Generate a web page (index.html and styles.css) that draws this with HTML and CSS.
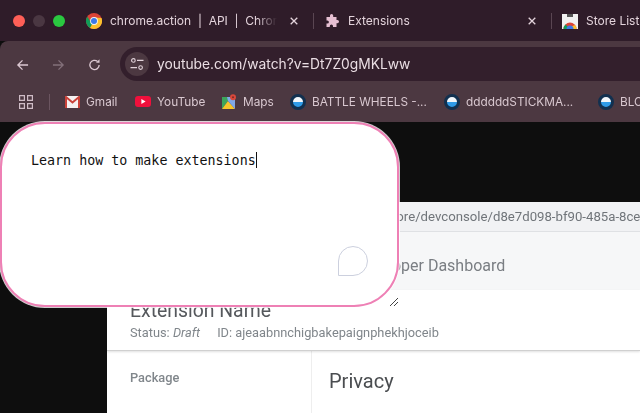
FILE: index.html
```html
<!DOCTYPE html>
<html lang="en">
<head>
    <meta charset="UTF-8">
    <title>Learn how to make extensions</title>
    <link rel="stylesheet" href="styles.css">
</head>
<body>
    <header class="browser">
        <div class="tabs">
            <div class="lights">
                <span class="light red"></span>
                <span class="light grey"></span>
                <span class="light green"></span>
            </div>
            <div class="tab tab-first">
                <svg class="favicon" viewBox="0 0 16 16">
                    <circle cx="8" cy="8" r="8" fill="#db4437"/>
                    <path d="M8 8 L1.07 4 A8 8 0 0 0 4 14.93 Z" fill="#0f9d58"/>
                    <path d="M8 8 L4 14.93 A8 8 0 0 0 8 16 A8 8 0 0 0 15.5 5 L8 4.5 Z" fill="#fbc02d"/>
                    <path d="M8 4.5 L1.9 4.5 L4 8 Z" fill="#db4437"/>
                    <circle cx="8" cy="8" r="3.9" fill="#f3f3f3"/>
                    <circle cx="8" cy="8" r="3" fill="#3b78e7"/>
                </svg>
                <span class="tab-title faded">chrome.action &nbsp;|&nbsp; API &nbsp;|&nbsp; Chrome</span>
                <svg class="close" viewBox="0 0 8 8"><path d="M.7 .7 L7.3 7.3 M7.3 .7 L.7 7.3" stroke="#e3d3db" stroke-width="1.3"/></svg>
            </div>
            <div class="tab tab-second">
                <svg class="favicon puzzle" viewBox="0 0 14 14">
                    <path d="M5 1.6 a1.6 1.6 0 0 1 3.2 0 V3 h3.3 v3 h0.9 a1.6 1.6 0 0 1 0 3.2 h-0.9 V13 H8 v-1 a1.6 1.6 0 0 0 -3.2 0 v1 H1.5 V9.6 h0.8 a1.6 1.6 0 0 0 0 -3.2 H1.5 V3 H5 Z" fill="#e6bfd2"/>
                </svg>
                <span class="tab-title">Extensions</span>
                <svg class="close" viewBox="0 0 8 8"><path d="M.7 .7 L7.3 7.3 M7.3 .7 L.7 7.3" stroke="#e3d3db" stroke-width="1.3"/></svg>
            </div>
            <div class="tab tab-third">
                <svg class="favicon" viewBox="0 0 16 16">
                    <path d="M0 1 H16 V16 H0 Z" fill="#f1f1f1"/>
                    <path d="M5 1 H11 V4 H5 Z" fill="#555"/>
                    <path d="M1.5 16 A6.5 6.5 0 0 1 14.5 16 Z" fill="#db4437"/>
                    <path d="M1.5 16 A6.5 6.5 0 0 1 3.5 11.5 L8 16 Z" fill="#0f9d58"/>
                    <path d="M14.5 16 A6.5 6.5 0 0 0 13 12 L8 14 V16 Z" fill="#fbc02d"/>
                    <path d="M4.5 16 A3.5 3.5 0 0 1 11.5 16 Z" fill="#3b78e7"/>
                </svg>
                <span class="tab-title">Store Listing</span>
            </div>
        </div>

        <div class="toolbar">
            <svg class="nav-icon" viewBox="0 0 14 14">
                <path d="M13 7 H2 M7 2 L2 7 L7 12" fill="none" stroke="#dcc8d2" stroke-width="1.4"/>
            </svg>
            <svg class="nav-icon" viewBox="0 0 14 14">
                <path d="M1 7 H12 M7 2 L12 7 L7 12" fill="none" stroke="#83707a" stroke-width="1.4"/>
            </svg>
            <svg class="nav-icon" viewBox="0 0 14 14">
                <path d="M12 7 A5 5 0 1 1 10.3 3.2" fill="none" stroke="#dcc8d2" stroke-width="1.4"/>
                <path d="M12.4 0.8 V4.6 H8.6 Z" fill="#dcc8d2"/>
            </svg>
            <div class="omnibox">
                <span class="site-info">
                    <svg viewBox="0 0 14 14" width="14" height="14">
                        <circle cx="3.4" cy="3.4" r="1.8" fill="none" stroke="#e3d3db" stroke-width="1.1"/>
                        <path d="M7 3.4 H13.5 M0.5 10.6 H7" stroke="#e3d3db" stroke-width="1.1"/>
                        <circle cx="10.6" cy="10.6" r="1.8" fill="none" stroke="#e3d3db" stroke-width="1.1"/>
                    </svg>
                </span>
                <span class="url">youtube.com/watch?v=Dt7Z0gMKLww</span>
            </div>
        </div>

        <nav class="bookmarks">
            <svg class="apps" viewBox="0 0 14 14">
                <path d="M.6 .6 H5.4 V5.4 H.6 Z M8.6 .6 H13.4 V5.4 H8.6 Z M.6 8.6 H5.4 V13.4 H.6 Z M8.6 8.6 H13.4 V13.4 H8.6 Z" fill="none" stroke="#cfbcc6" stroke-width="1.2"/>
            </svg>
            <span class="bar-sep"></span>
            <a class="mark mark-gmail">
                <svg viewBox="0 0 15 12" width="15" height="12">
                    <path d="M0 0 H15 V12 H0 Z" fill="#f4f1f1"/>
                    <path d="M1 12 V1 L7.5 6.5 L14 1 V12" fill="none" stroke="#c9423a" stroke-width="2"/>
                </svg>
                Gmail
            </a>
            <a class="mark mark-youtube">
                <svg viewBox="0 0 16 11" width="16" height="11">
                    <rect width="16" height="11" rx="3" fill="#f0103c"/>
                    <path d="M6.4 3 L10.6 5.5 L6.4 8 Z" fill="#fff"/>
                </svg>
                YouTube
            </a>
            <a class="mark mark-maps">
                <svg viewBox="0 0 14 15" width="14" height="15">
                    <path d="M0 3 L9 3 L0 15 Z" fill="#3ca55c"/>
                    <path d="M0 15 L6 7 L13 15 Z" fill="#f7c52b"/>
                    <path d="M5 3 H13 V15 L6 7 Z" fill="#7fa8e8"/>
                    <circle cx="11" cy="3.2" r="3" fill="#d9483b"/>
                    <circle cx="11" cy="3.2" r="1" fill="#7c2c25"/>
                </svg>
                Maps
            </a>
            <a class="mark mark-wheels"><span class="disc"></span>BATTLE WHEELS -...</a>
            <a class="mark mark-stick"><span class="disc"></span>ddddddSTICKMA...</a>
            <a class="mark"><span class="disc"></span>BLOCK</a>
        </nav>
    </header>

    <main class="desk">
        <div class="shot">
            <div class="shot-url">chrome.google.com/webstore/devconsole/d8e7d098-bf90-485a-8ce7-f2a1c0d39b14</div>
            <div class="shot-title">Developer Dashboard</div>
            <div class="shot-head">
                <div class="ext-name">Extension Name</div>
                <div class="ext-meta">Status: <em>Draft</em><span class="ext-id">ID: ajeaabnnchigbakepaignphekhjoceib</span></div>
            </div>
            <div class="shot-body">
                <ul class="shot-side">
                    <li>Package</li>
                    <li>Store listing</li>
                </ul>
                <h2 class="shot-heading">Privacy</h2>
            </div>
        </div>
    </main>

    <div class="note">
        <div class="note-text">Learn how to make extensions<span class="caret"></span></div>
        <span class="bubble"></span>
        <svg class="grip" viewBox="0 0 8 8">
            <path d="M0 8 L8 0 M4 8 L8 4" stroke="#444" stroke-width="1"/>
        </svg>
    </div>
</body>
</html>
```

FILE: styles.css
```css
html, body {
    margin: 0;
    padding: 0;
}
body {
    width: 640px;
    height: 413px;
    overflow: hidden;
    position: relative;
    background: #0e0e0e;
    font-family: Inter, "Liberation Sans", sans-serif;
    color: #e3d3db;
}
.browser {
    filter: blur(0.25px);
}

/* tab strip */
.tabs {
    height: 41px;
    background: #2f1c29;
    display: flex;
    align-items: center;
    overflow: hidden;
    font-size: 12px;
}
.lights {
    display: flex;
    gap: 8px;
    padding-left: 13px;
    width: 73px;
    flex: none;
    box-sizing: border-box;
}
.light {
    width: 12px;
    height: 12px;
    border-radius: 50%;
}
.red { background: #fe5f57; }
.grey { background: #4a3742; }
.green { background: #2ac840; }

.tab {
    display: flex;
    align-items: center;
    flex: none;
    height: 16px;
    gap: 8px;
    box-sizing: border-box;
    position: relative;
}
.tab-first { width: 240px; padding-left: 13px; }
.tab-second { width: 238px; padding-left: 11px; gap: 9px; border-left: 1px solid #5a4652; }
.tab-third { padding-left: 10px; border-left: 1px solid #5a4652; }
.favicon { width: 16px; height: 16px; flex: none; }
.puzzle { width: 14px; height: 14px; }
.tab-title {
    white-space: nowrap;
    overflow: hidden;
    color: #e3d3db;
}
.faded {
    width: 167px;
    -webkit-mask-image: linear-gradient(to right, #000 88%, transparent);
    mask-image: linear-gradient(to right, #000 88%, transparent);
}
.close {
    position: absolute;
    right: 15px;
    top: 4px;
    width: 8px;
    height: 8px;
}

/* toolbar */
.toolbar {
    height: 40px;
    background: #4c3841;
    border-radius: 8px 0 0 0;
    box-sizing: border-box;
    padding: 6px 0 0 16px;
    display: flex;
    gap: 23px;
}
.nav-icon {
    width: 13px;
    height: 14px;
    margin-top: 11px;
    flex: none;
}
.omnibox {
    flex: 1;
    margin-left: -4px;
    background: #331f2c;
    border-radius: 17px 0 0 17px;
    display: flex;
    align-items: center;
    padding-left: 5px;
    gap: 8px;
}
.site-info {
    width: 24px;
    height: 24px;
    border-radius: 50%;
    background: #4c3841;
    display: flex;
    align-items: center;
    justify-content: center;
}
.url {
    font-size: 13.8px;
    color: #eadde3;
    white-space: nowrap;
}

/* bookmarks */
.bookmarks {
    height: 41px;
    background: #4c3841;
    display: flex;
    align-items: center;
    padding-left: 19px;
    font-size: 11.8px;
    color: #d9c8d0;
    white-space: nowrap;
    overflow: hidden;
}
.apps { width: 14px; height: 14px; flex: none; }
.bar-sep {
    width: 1px;
    height: 16px;
    background: #6b5560;
    margin: 0 15px 0 16px;
    flex: none;
}
.mark {
    display: flex;
    align-items: center;
    gap: 6px;
    flex: none;
}
.mark-gmail { width: 70px; }
.mark-youtube { width: 87px; }
.mark-maps { width: 68px; gap: 7px; }
.mark-wheels { width: 154px; }
.mark-stick { width: 154px; }
.disc {
    width: 16px;
    height: 16px;
    border-radius: 50%;
    box-sizing: border-box;
    border: 3px solid #12304f;
    background: linear-gradient(#f2f6fa 50%, #2f9be8 50%);
    flex: none;
}

/* blurred screenshot behind the note */
.desk {
    padding: 80px 0 0 107px;
    height: 291px;
    box-sizing: border-box;
}
.shot {
    background: #fff;
    height: 211px;
    overflow: hidden;
    filter: blur(0.6px);
    color: #5f6368;
    font-family: Roboto, "Liberation Sans", sans-serif;
}
.shot-url {
    height: 30px;
    line-height: 29px;
    background: #f1f2f4;
    border-bottom: 1px solid #dfe1e4;
    box-sizing: border-box;
    font-size: 13.2px;
    padding-left: 131px;
    white-space: nowrap;
    overflow: hidden;
    color: #70757a;
}
.shot-title {
    height: 58px;
    line-height: 67px;
    background: #f6f7f8;
    font-size: 16px;
    padding-left: 246px;
    white-space: nowrap;
    color: #7a7e83;
}
.shot-head {
    height: 61px;
    padding: 9px 0 0 23px;
    box-sizing: border-box;
    border-bottom: 1px solid #d0d0d0;
    box-shadow: 0 1px 2px rgba(0, 0, 0, 0.12);
    position: relative;
}
.ext-name {
    font-size: 19.4px;
    line-height: 23px;
    color: #55585c;
}
.ext-meta {
    font-size: 12.8px;
    margin-top: 3px;
    color: #80868b;
    white-space: nowrap;
}
.ext-id { margin-left: 17px; }
.shot-body {
    display: flex;
}
.shot-side {
    list-style: none;
    margin: 0;
    padding: 19px 0 0 23px;
    width: 205px;
    box-sizing: border-box;
    border-right: 1px solid #eee;
    height: 120px;
    font-size: 12.8px;
    font-weight: 500;
    color: #80868b;
}
.shot-side li {
    margin-bottom: 26px;
}
.shot-heading {
    margin: 18px 0 0 17px;
    font-size: 20px;
    font-weight: 400;
    color: #4a4d50;
}

/* note box over the page */
.note {
    position: absolute;
    left: 0;
    top: 122px;
    width: 399px;
    height: 185px;
    box-sizing: border-box;
    background: #fff;
    border: 2px solid #ee80b5;
    border-radius: 45px;
    box-shadow: 0 0 0 1px rgba(255, 255, 255, 0.8);
    padding: 28px 0 0 29px;
}
.note-text {
    font-family: "DejaVu Sans Mono", monospace;
    font-size: 13.33px;
    line-height: 18px;
    color: #111;
    white-space: nowrap;
}
.caret {
    display: inline-block;
    width: 1px;
    height: 16px;
    background: #111;
    vertical-align: -3px;
}
.bubble {
    position: absolute;
    left: 336px;
    top: 122px;
    width: 30px;
    height: 30px;
    box-sizing: border-box;
    border: 1px solid #ccd0de;
    border-radius: 50% 50% 50% 0;
}
.grip {
    position: absolute;
    left: 388px;
    top: 174px;
    width: 8px;
    height: 8px;
}
```
